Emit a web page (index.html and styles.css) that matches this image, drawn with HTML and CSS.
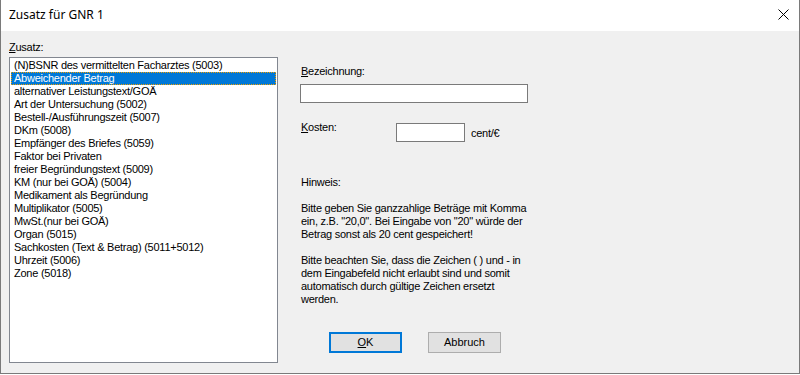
FILE: index.html
```html
<!DOCTYPE html>
<html lang="de">
<head>
  <meta charset="UTF-8">
  <title>Zusatz für GNR 1</title>
  <link rel="stylesheet" href="styles.css">
</head>
<body>

  <div class="window">
    <div class="titlebar">
      <span class="title">Zusatz für GNR 1</span>
      <svg class="close" width="11" height="11" viewBox="0 0 11 11">
        <path d="M0.5 0.5 L10.5 10.5 M10.5 0.5 L0.5 10.5" stroke="#000" stroke-width="1" fill="none"/>
      </svg>
    </div>

    <div class="client">
      <!-- Zusatz list -->
      <div class="left">
        <div class="label"><u>Z</u>usatz:</div>
        <ul class="listbox">
          <li>(N)BSNR des vermittelten Facharztes (5003)</li>
          <li class="selected">Abweichender Betrag</li>
          <li>alternativer Leistungstext/GOÄ</li>
          <li>Art der Untersuchung (5002)</li>
          <li>Bestell-/Ausführungszeit (5007)</li>
          <li>DKm (5008)</li>
          <li>Empfänger des Briefes (5059)</li>
          <li>Faktor bei Privaten</li>
          <li>freier Begründungstext (5009)</li>
          <li>KM (nur bei GOÄ) (5004)</li>
          <li>Medikament als Begründung</li>
          <li>Multiplikator (5005)</li>
          <li>MwSt.(nur bei GOÄ)</li>
          <li>Organ (5015)</li>
          <li>Sachkosten (Text &amp; Betrag) (5011+5012)</li>
          <li>Uhrzeit (5006)</li>
          <li>Zone (5018)</li>
        </ul>
      </div>

      <!-- Details -->
      <div class="right">
        <div class="label label-name"><u>B</u>ezeichnung:</div>
        <input type="text" class="field field-name">

        <div class="cost-row">
          <div class="label label-cost"><u>K</u>osten:</div>
          <input type="text" class="field field-cost">
          <span class="unit">cent/€</span>
        </div>

        <div class="hint">
          <p>Hinweis:</p>
          <p>Bitte geben Sie ganzzahlige Beträge mit Komma ein, z.B. "20,0". Bei Eingabe von "20" würde der Betrag sonst als 20 cent gespeichert!</p>
          <p>Bitte beachten Sie, dass die Zeichen ( ) und - in dem Eingabefeld nicht erlaubt sind und somit automatisch durch gültige Zeichen ersetzt werden.</p>
        </div>

        <div class="buttons">
          <button class="btn btn-default"><u>O</u>K</button>
          <button class="btn">Abbruch</button>
        </div>
      </div>
    </div>
  </div>

</body>
</html>
```

FILE: styles.css
```css
* {
  margin: 0;
  padding: 0;
  box-sizing: border-box;
}

body {
  font-family: 'Liberation Sans', Arial, sans-serif;
  font-size: 11px;
  line-height: 13px;
  letter-spacing: -0.25px;
  color: #000;
  background-color: #fff;
  width: 800px;
  height: 375px;
  overflow: hidden;
}

.window {
  width: 800px;
  height: 374px;
  border: 1px solid #7a7a7a;
  border-top: none;
  background-color: #f0f0f0;
  display: flex;
  flex-direction: column;
}

.titlebar {
  height: 31px;
  background-color: #fff;
  display: flex;
  align-items: center;
  justify-content: space-between;
  padding: 0 10px 0 8px;
}

.title {
  font-family: 'Noto Sans', 'Open Sans', sans-serif;
  font-size: 12px;
  letter-spacing: 0;
  margin-top: -3px;
}

.close {
  margin-top: -3px;
}

.client {
  flex: 1;
  display: flex;
  padding: 10px 0 0 8px;
}

.left {
  width: 269px;
}

.label u {
  text-decoration: underline;
}

.listbox {
  list-style: none;
  margin-top: 3px;
  height: 306px;
  background-color: #fff;
  border: 1px solid #828790;
  padding: 1px 1px;
}

.listbox li {
  height: 13px;
  padding-left: 3px;
  white-space: nowrap;
}

.listbox li.selected {
  background-color: #0078d7;
  color: #fff;
  outline: 1px dotted #f0a000;
  outline-offset: -1px;
}

.right {
  margin-left: 22px;
  width: 240px;
}

.label-name {
  margin-top: 24px;
  padding-left: 1px;
}

.field {
  display: block;
  background-color: #fff;
  border: 1px solid #7a7a7a;
  height: 19px;
  font: inherit;
}

.field-name {
  width: 228px;
  margin-top: 6px;
}

.cost-row {
  display: flex;
  align-items: flex-start;
  margin-top: 20px;
}

.label-cost {
  width: 96px;
  padding-left: 1px;
  margin-top: -2px;
}

.field-cost {
  width: 69px;
}

.unit {
  margin-left: 6px;
  margin-top: 4px;
}

.hint {
  margin-top: 34px;
  width: 234px;
  padding-left: 1px;
}

.hint p + p {
  margin-top: 13px;
}

.buttons {
  display: flex;
  margin-top: 26px;
  padding-left: 29px;
  gap: 26px;
}

.btn {
  width: 73px;
  height: 21px;
  background-color: #e1e1e1;
  border: 1px solid #adadad;
  font: inherit;
  color: #000;
}

.btn-default {
  border: 2px solid #0078d7;
}
```
